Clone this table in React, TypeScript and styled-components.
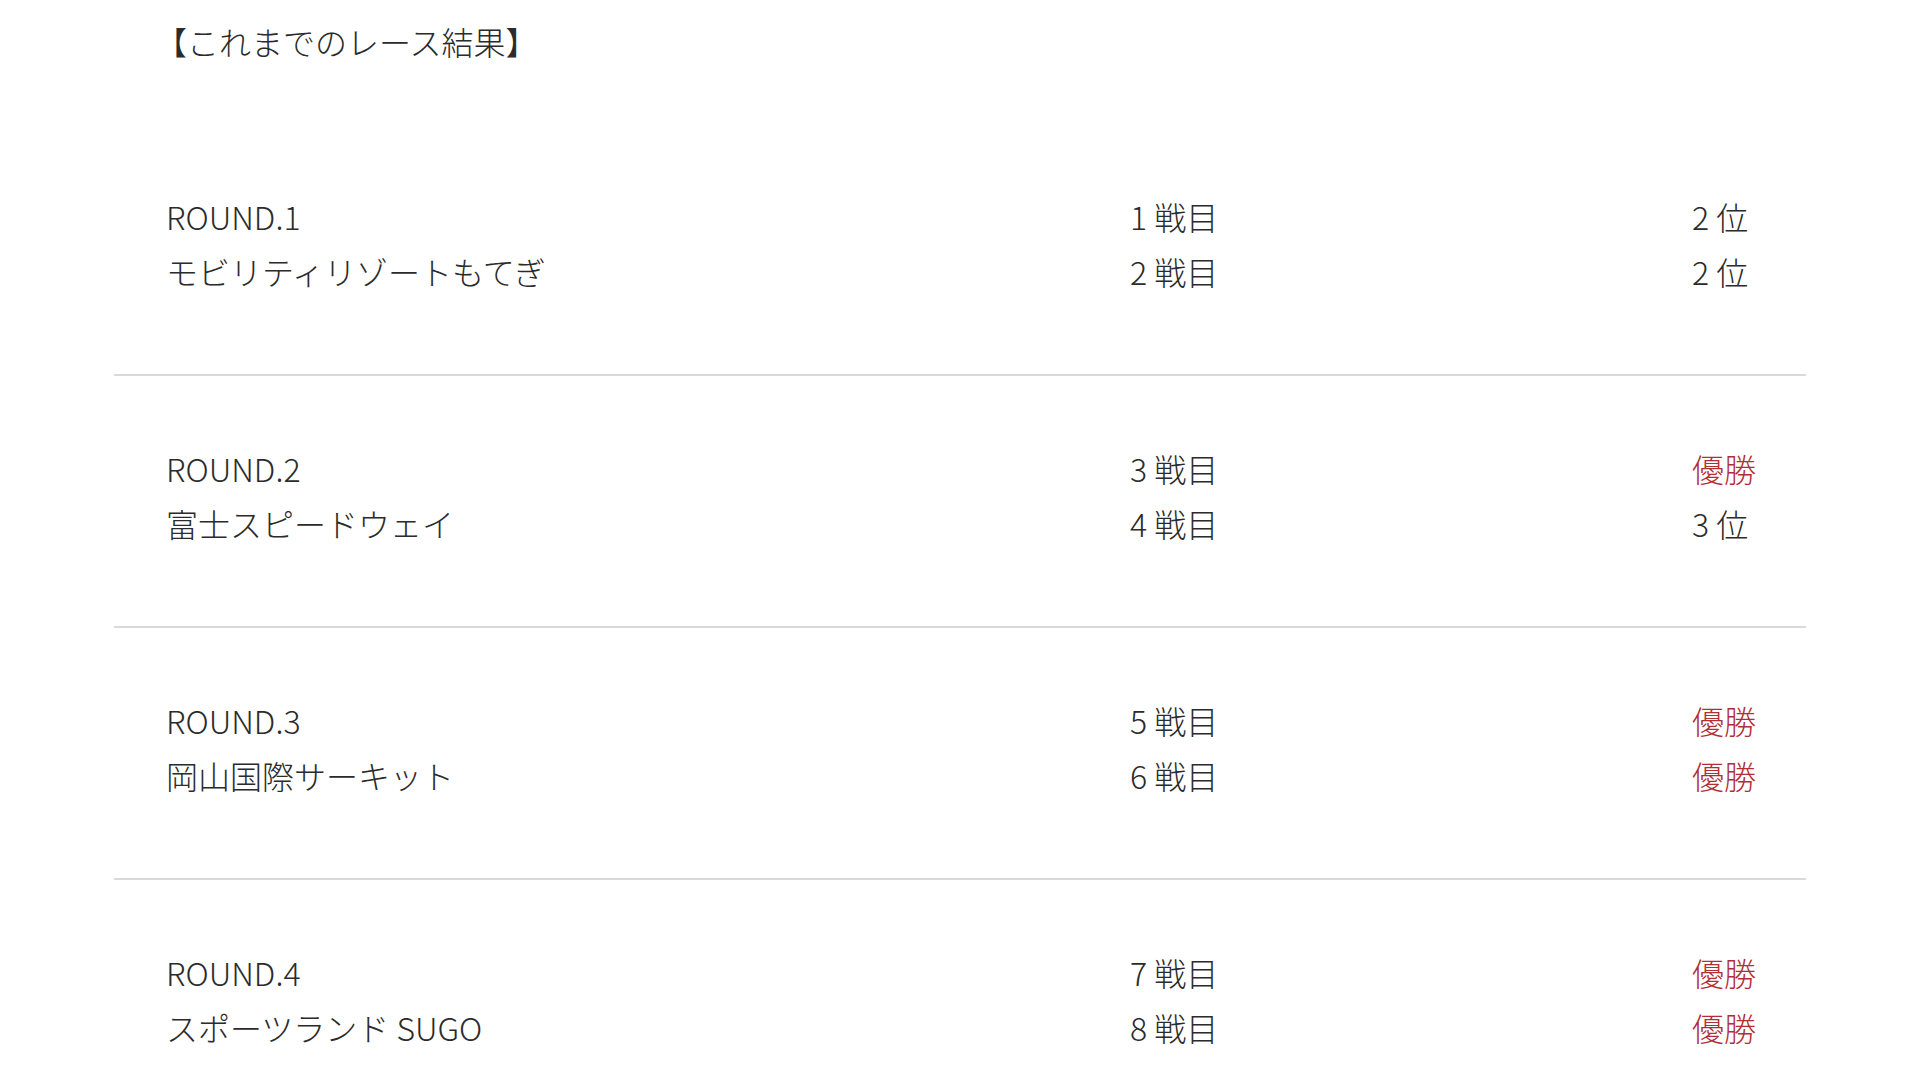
import React from "react";
import styled, { createGlobalStyle } from "styled-components";

const GlobalStyle = createGlobalStyle`
  html, body {
    margin: 0;
    padding: 0;
    background: #ffffff;
  }
  body {
    font-family: "Noto Sans CJK JP", "Noto Sans", sans-serif;
    color: #2b2b2b;
    -webkit-font-smoothing: antialiased;
  }
`;

const Page = styled.main`
  padding: 0 114px;
`;

const Title = styled.h2`
  margin: 0 0 55px;
  padding: 14px 0 0 41px;
  font-size: 32px;
  font-weight: 300;
  line-height: 55px;
  color: #2b2b2b;
`;

const ResultList = styled.ul`
  list-style: none;
  margin: 0;
  padding: 0;
`;

const RoundRow = styled.li`
  display: grid;
  grid-template-columns: 964px 562px 1fr;
  padding: 65px 52px 75px;
  border-bottom: 2px solid #d9d9d9;
  font-size: 32px;
  font-weight: 300;
  line-height: 55px;

  &:last-child {
    border-bottom: none;
  }
`;

const Cell = styled.span<{ $win?: boolean }>`
  white-space: nowrap;
  color: ${(p) => (p.$win ? "#b02f37" : "#2b2b2b")};
`;

type Race = { no: number; result: string };
type Round = { round: string; venue: string; races: [Race, Race] };

const rounds: Round[] = [
  {
    round: "ROUND.1",
    venue: "モビリティリゾートもてぎ",
    races: [
      { no: 1, result: "2 位" },
      { no: 2, result: "2 位" },
    ],
  },
  {
    round: "ROUND.2",
    venue: "富士スピードウェイ",
    races: [
      { no: 3, result: "優勝" },
      { no: 4, result: "3 位" },
    ],
  },
  {
    round: "ROUND.3",
    venue: "岡山国際サーキット",
    races: [
      { no: 5, result: "優勝" },
      { no: 6, result: "優勝" },
    ],
  },
  {
    round: "ROUND.4",
    venue: "スポーツランド SUGO",
    races: [
      { no: 7, result: "優勝" },
      { no: 8, result: "優勝" },
    ],
  },
];

export default function App() {
  return (
    <>
      <GlobalStyle />
      <Page>
        <Title>【これまでのレース結果】</Title>
        <ResultList>
          {rounds.map((r) => (
            <RoundRow key={r.round}>
              <Cell>{r.round}</Cell>
              <Cell>{r.races[0].no} 戦目</Cell>
              <Cell $win={r.races[0].result === "優勝"}>{r.races[0].result}</Cell>
              <Cell>{r.venue}</Cell>
              <Cell>{r.races[1].no} 戦目</Cell>
              <Cell $win={r.races[1].result === "優勝"}>{r.races[1].result}</Cell>
            </RoundRow>
          ))}
        </ResultList>
      </Page>
    </>
  );
}
